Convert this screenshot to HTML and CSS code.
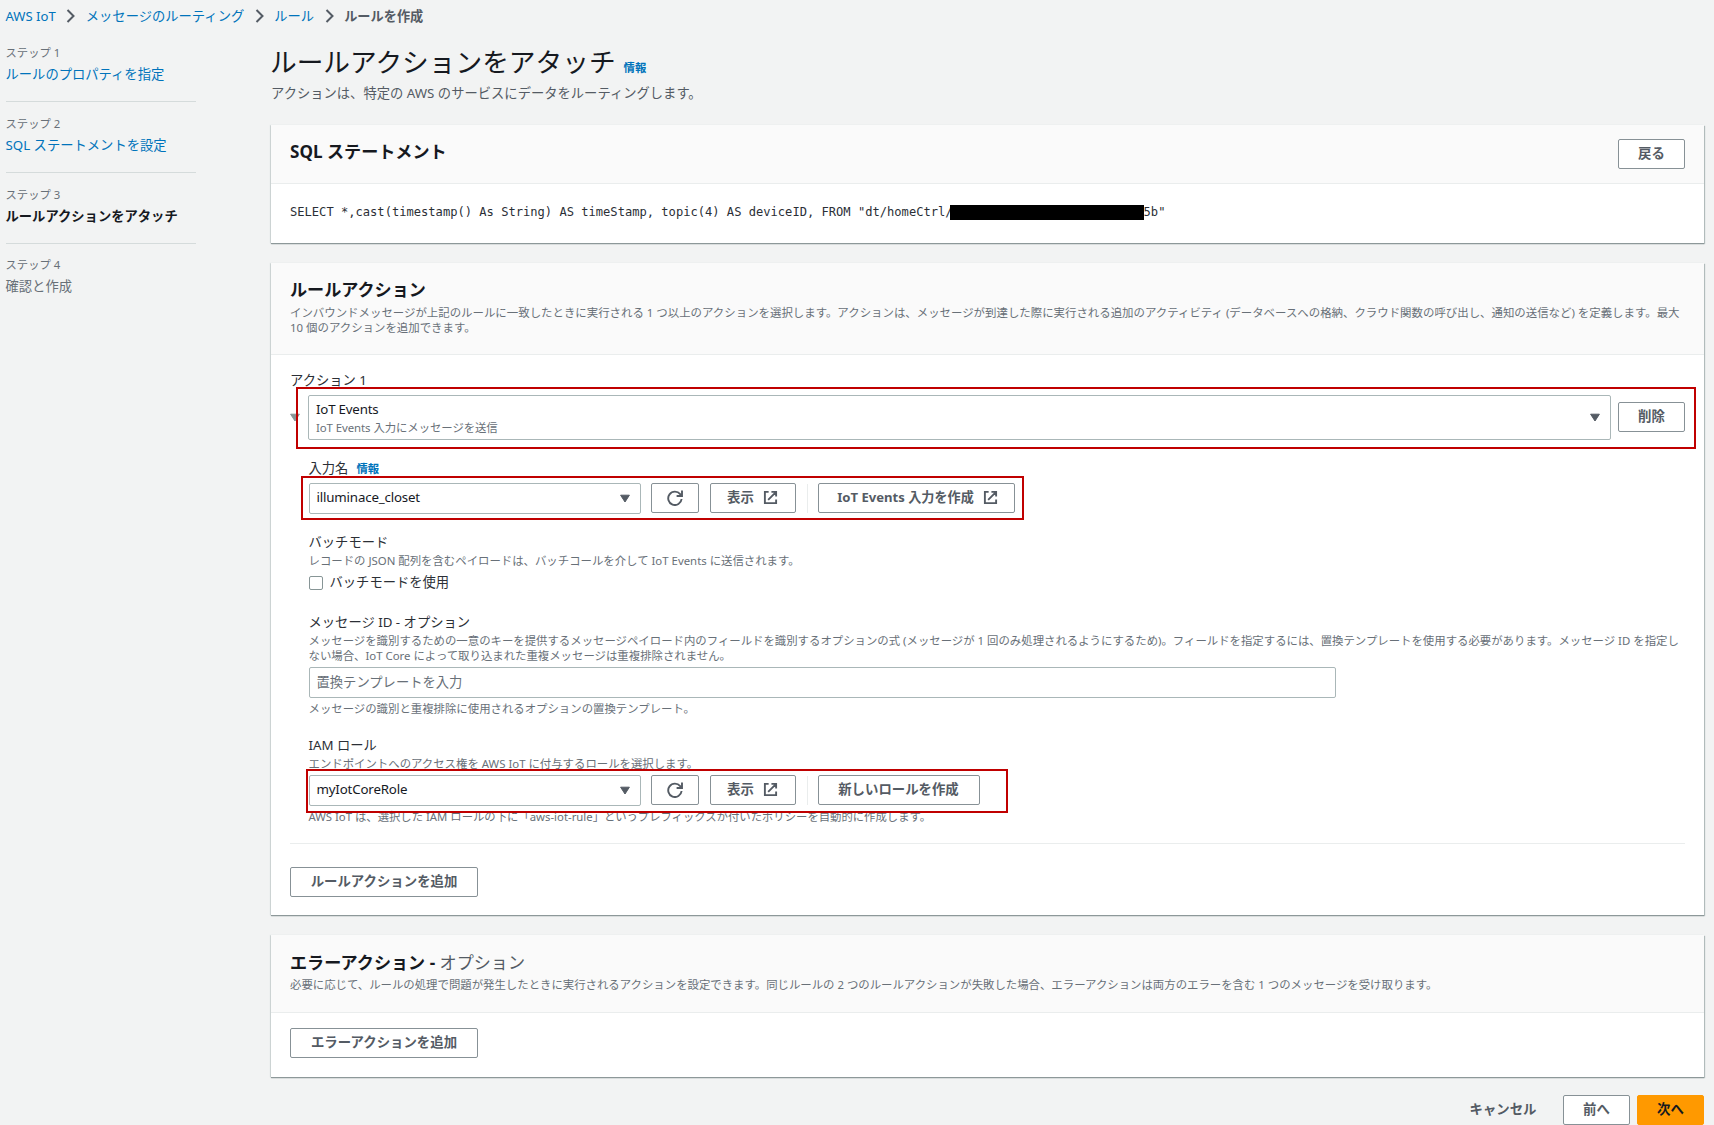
FILE: index.html
```html
<!DOCTYPE html>
<html lang="ja">
<head>
<meta charset="utf-8">
<title>ルールを作成</title>
<link rel="stylesheet" href="styles.css">
</head>
<body>
<svg class="defs" width="0" height="0" aria-hidden="true">
  <symbol id="external" viewBox="0 0 16 16"><path d="M6 2H2v12h12v-4M9 2h5v5M5.500 10.500 13.500 2.500" fill="none" stroke="currentColor" stroke-width="2"/></symbol>
  <symbol id="refresh" viewBox="0 0 16 16"><path d="M14.600 9A6.700 6.700 0 1 1 13.200 4.200L14.500 6M15 .6V6H9.600" fill="none" stroke="currentColor" stroke-width="1.900"/></symbol>
  <symbol id="chevron" viewBox="0 0 10 14"><path d="M1.500 1 7.500 7l-6 6" fill="none" stroke="currentColor" stroke-width="2"/></symbol>
  <symbol id="caret" viewBox="0 0 10 9"><path d="M.6 1.200h8.800L5 8Z" fill="currentColor" stroke="currentColor" stroke-linejoin="round"/></symbol>
</svg>
<nav class="breadcrumbs">
  <a class="crumb-aws">AWS IoT</a><svg class="chevron"><use href="#chevron"/></svg>
  <a>メッセージのルーティング</a><svg class="chevron"><use href="#chevron"/></svg>
  <a>ルール</a><svg class="chevron"><use href="#chevron"/></svg>
  <b>ルールを作成</b>
</nav>
<div class="layout">
  <aside class="steps">
    <div class="step"><small>ステップ 1</small><a>ルールのプロパティを指定</a></div>
    <div class="step"><small>ステップ 2</small><a>SQL ステートメントを設定</a></div>
    <div class="step current"><small>ステップ 3</small><b>ルールアクションをアタッチ</b></div>
    <div class="step todo"><small>ステップ 4</small><span>確認と作成</span></div>
  </aside>
  <main>
    <div class="title"><h1>ルールアクションをアタッチ</h1><a class="info">情報</a></div>
    <p class="lead">アクションは、特定の AWS のサービスにデータをルーティングします。</p>

    <section class="card sql">
      <header><h2>SQL ステートメント</h2><button class="btn">戻る</button></header>
      <div class="code">SELECT *,cast(timestamp() As String) AS timeStamp, topic(4) AS deviceID, FROM "dt/homeCtrl/<span class="redacted"></span>5b"</div>
    </section>

    <section class="card actions">
      <header>
        <h2>ルールアクション</h2>
        <p class="hint intro">インバウンドメッセージが上記のルールに一致したときに実行される 1 つ以上のアクションを選択します。アクションは、メッセージが到達した際に実行される追加のアクティビティ (データベースへの格納、クラウド関数の呼び出し、通知の送信など) を定義します。最大<br>10 個のアクションを追加できます。</p>
      </header>
      <div class="body">
        <div class="label">アクション 1</div>
        <div class="action-row">
          <svg class="toggle"><use href="#caret"/></svg>
          <div class="select tall"><div><div class="value">IoT Events</div><div class="hint">IoT Events 入力にメッセージを送信</div></div><svg class="caret"><use href="#caret"/></svg></div>
          <button class="btn">削除</button>
          <i class="mark mark-action"></i>
        </div>
        <div class="fields">
          <div class="label input-name">入力名<a class="info">情報</a></div>
          <div class="row">
            <div class="select"><span class="value">illuminace_closet</span><svg class="caret"><use href="#caret"/></svg></div>
            <button class="btn icon-only"><svg class="refresh"><use href="#refresh"/></svg></button>
            <button class="btn view">表示<svg class="ext"><use href="#external"/></svg></button>
            <i class="sep"></i>
            <button class="btn create-input"><span>IoT Events 入力を作成</span><svg class="ext"><use href="#external"/></svg></button>
            <i class="mark mark-input"></i>
          </div>
          <div class="label batch">バッチモード</div>
          <p class="hint batch-hint">レコードの JSON 配列を含むペイロードは、バッチコールを介して IoT Events に送信されます。</p>
          <label class="check"><i class="box"></i>バッチモードを使用</label>
          <div class="label message">メッセージ ID - オプション</div>
          <p class="hint message-hint">メッセージを識別するための一意のキーを提供するメッセージペイロード内のフィールドを識別するオプションの式 (メッセージが 1 回のみ処理されるようにするため)。フィールドを指定するには、置換テンプレートを使用する必要があります。メッセージ ID を指定し<br>ない場合、IoT Core によって取り込まれた重複メッセージは重複排除されません。</p>
          <div class="input">置換テンプレートを入力</div>
          <p class="hint input-help">メッセージの識別と重複排除に使用されるオプションの置換テンプレート。</p>
          <div class="label role">IAM ロール</div>
          <p class="hint role-hint">エンドポイントへのアクセス権を AWS IoT に付与するロールを選択します。</p>
          <div class="row role-row">
            <div class="select"><span class="value">myIotCoreRole</span><svg class="caret"><use href="#caret"/></svg></div>
            <button class="btn icon-only"><svg class="refresh"><use href="#refresh"/></svg></button>
            <button class="btn view">表示<svg class="ext"><use href="#external"/></svg></button>
            <i class="sep"></i>
            <button class="btn create-role">新しいロールを作成</button>
            <i class="mark mark-role"></i>
          </div>
          <p class="hint role-help">AWS IoT は、選択した IAM ロールの下に「aws-iot-rule」というプレフィックスが付いたポリシーを自動的に作成します。</p>
        </div>
        <hr>
        <button class="btn wide">ルールアクションを追加</button>
      </div>
    </section>

    <section class="card error">
      <header>
        <h2>エラーアクション - <span>オプション</span></h2>
        <p class="hint">必要に応じて、ルールの処理で問題が発生したときに実行されるアクションを設定できます。同じルールの 2 つのルールアクションが失敗した場合、エラーアクションは両方のエラーを含む 1 つのメッセージを受け取ります。</p>
      </header>
      <div class="body"><button class="btn wide">エラーアクションを追加</button></div>
    </section>

    <footer><button class="btn link">キャンセル</button><button class="btn">前へ</button><button class="btn primary">次へ</button></footer>
  </main>
</div>
</body>
</html>
```
FILE: styles.css
```css
* { box-sizing: border-box; }
body {
  margin: 0;
  width: 1714px;
  height: 1125px;
  overflow: hidden;
  background: #f2f3f3;
  color: #16191f;
  font: 13.3px/18px "Noto Sans", "Noto Sans CJK JP", sans-serif;
  white-space: nowrap;
}
h1, h2, p { margin: 0; }
a { color: #0073bb; }
svg { flex: none; display: block; }
.defs { position: absolute; }

.breadcrumbs { display: flex; align-items: center; height: 32px; padding-left: 5.5px; }
.breadcrumbs b { color: #545b64; font-size: 13.2px; }
.crumb-aws { font-size: 13.1px; }
.chevron { width: 10px; height: 14px; margin: 0 9.5px 0 10.5px; color: #545b64; }

.layout { display: flex; }
.steps { width: 190px; margin: 12px 75.5px 0 5.5px; flex: none; }
.step { height: 70.8px; display: flex; flex-direction: column; }
.step small { font-size: 11.33px; color: #687078; margin-bottom: 3px; }
.step:not(.todo)::after { content: ""; height: 1px; background: #d5dbdb; margin-top: 18px; }
.todo span { color: #687078; }

main { width: 1433px; padding-top: 11px; }
.title { display: flex; height: 38px; align-items: center; }
h1 { font-size: 26.7px; line-height: 38px; font-weight: 400; margin-left: -1px; }
.info { font-size: 11.4px; font-weight: 700; }
.title .info { margin: 11px 0 0 8px; }
.lead { color: #545b64; margin: 3px 0 23px; }

.card { background: #fff; margin-bottom: 20px; box-shadow: 0 1px 1px #8d9899, 1px 1px 1px #b9c2c2, -1px 0 1px #d9dfdf; }
.card header { background: #fafafa; border-bottom: 1px solid #eaeded; padding: 0 19px; }
h2 { font-size: 17.1px; line-height: 20px; font-weight: 700; }
h2 span { font-weight: 400; color: #545b64; }
.sql { height: 118px; }
.sql header { height: 59px; display: flex; justify-content: space-between; padding-top: 14px; }
.sql h2 { margin-top: 3px; }
.code { font: 12.1px/18px "DejaVu Sans Mono", monospace; padding: 19px; display: flex; align-items: center; white-space: pre; color: #2b2f36; }
.redacted { width: 194px; height: 15px; background: #000; margin-left: -3px; }

.hint { font-size: 11.4px; line-height: 15px; color: #687078; }
.actions { height: 652px; }
.actions header { height: 92px; padding-top: 17px; }
.actions header .hint { margin-top: 5px; font-size: 11.43px; }
.actions .body { padding: 16px 19px 0; }
.label { height: 18px; color: #2b2f36; }

.btn {
  display: flex; align-items: center; justify-content: center;
  width: 67px; height: 30px; padding: 0 0 2px; flex: none;
  border: 1px solid #879196; border-radius: 2px; background: #fff;
  color: #545b64; font: 700 13.4px/18px "Noto Sans", "Noto Sans CJK JP", sans-serif;
}
.btn.wide { width: 188px; }
.btn.icon-only { width: 48px; margin-left: 10px; padding-bottom: 0; }
.btn.view { width: 86px; margin-left: 11px; gap: 9px; }
.btn.create-input { width: 197px; gap: 9px; padding-left: 3px; font-size: 13.1px; }
.btn.create-role { width: 162px; }
.refresh { width: 16px; height: 16px; }
.ext { width: 15px; height: 15px; margin-top: 1px; }
.sep { width: 1px; height: 29px; background: #eaeded; margin: 0 10px 0 11px; }

.select {
  display: flex; align-items: center; justify-content: space-between;
  width: 332px; height: 31px; padding: 0 10px 0 7px;
  border: 1px solid #aab7b8; border-radius: 2px; background: #fff;
}
.row .value { margin-top: -3px; letter-spacing: -.17px; }
.caret { width: 10px; height: 9px; color: #545b64; }
.action-row { position: relative; display: flex; align-items: center; height: 45px; margin-top: 6px; }
.action-row .btn { margin-top: -1px; }
.toggle { width: 10px; height: 9px; color: #879596; margin-right: 8px; }
.select.tall { width: 1303px; height: 45px; margin-right: 7px; }
.tall .value { height: 18px; margin-top: -1px; letter-spacing: -.2px; }
.tall .hint { margin-top: 2px; letter-spacing: -.07px; }
.row { position: relative; display: flex; align-items: center; height: 31px; margin-top: 6px; }
.row .btn { margin-bottom: 1px; }
.mark { position: absolute; border: 2px solid #c00000; }
.mark-action { left: 6px; top: -8px; width: 1400px; height: 62px; }
.mark-input { left: -8px; top: -7px; width: 723px; height: 44px; }
.mark-role { left: -3px; top: -6px; width: 702px; height: 44px; }

.fields { padding-left: 18.5px; }
.input-name { margin-top: 19px; }
.input-name .info { margin-left: 8px; }
.batch { margin-top: 19px; }
.batch-hint { margin-top: 2px; }
.check { display: flex; align-items: center; gap: 7px; margin-top: 5px; color: #2b2f36; }
.box { width: 14px; height: 14px; border: 1px solid #879596; border-radius: 2px; margin-top: 1px; }
.message { margin-top: 22px; }
.message-hint { margin-top: 2px; }
.input { width: 1027px; height: 31px; margin-top: 4px; padding: 0 7px; border: 1px solid #aab7b8; border-radius: 2px; line-height: 28px; color: #687078; }
.input-help { margin-top: 3px; }
.role { margin-top: 20px; }
.role-hint { margin-top: 2px; }
.role-row { margin-top: 4px; }
.role-help { margin-top: 3px; font-size: 11.35px; }
hr { border: 0; height: 1px; background: #eaeded; margin: 19px 0 23px; }

.error { height: 142px; margin-bottom: 18px; }
.error header { height: 78px; padding-top: 18px; }
.error header .hint { margin-top: 4px; }
.error .body { padding: 15px 19px; }

footer { display: flex; justify-content: flex-end; gap: 7px; }
.btn.link { width: 114px; border-color: transparent; background: none; padding-left: 8px; }
.btn.primary { background: #ff9900; border-color: #ff9900; color: #16191f; }
```
